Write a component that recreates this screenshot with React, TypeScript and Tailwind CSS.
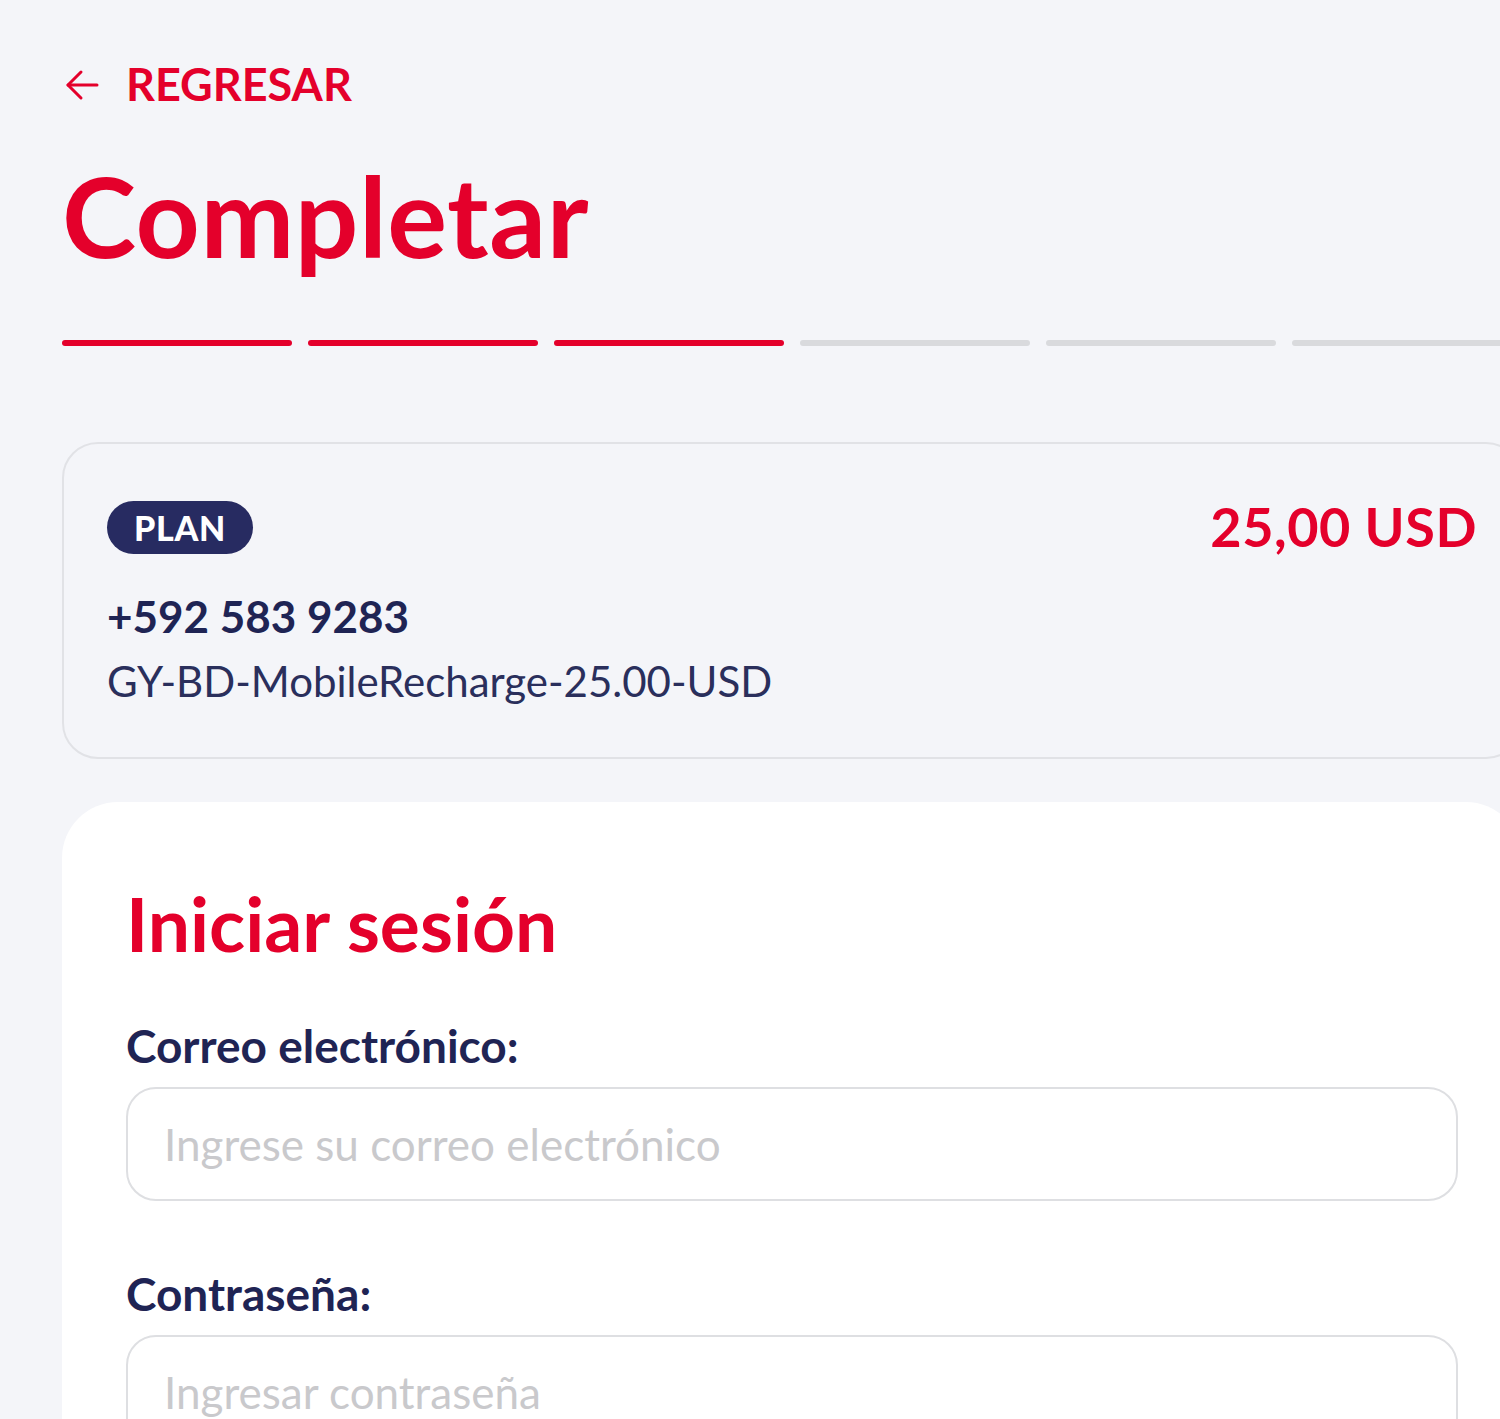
import React from 'react';

const steps = [true, true, true, false, false, false];

const BackArrow = () => (
  <svg width="34" height="32" viewBox="0 0 34 32" fill="none" stroke="currentColor" strokeWidth="3" strokeLinecap="round" strokeLinejoin="round">
    <path d="M16 3 3 16l13 13" />
    <path d="M3 16h29" />
  </svg>
);

export default function App() {
  return (
    <div className="min-h-screen w-full overflow-hidden bg-[#f4f5f9] font-['Lato','Noto_Sans',sans-serif]">
      <div className="ml-[62px] w-[1460px] pt-[62px]">
        {/* back link */}
        <button className="flex items-center gap-[27px] pl-[3px] text-[#e4002b]">
          <BackArrow />
          <span className="text-[45px] font-bold leading-none">REGRESAR</span>
        </button>

        <h1 className="mt-[52px] text-[112px] font-bold leading-none tracking-[0.005em] text-[#e4002b]">
          Completar
        </h1>

        {/* progress */}
        <div className="mt-[69px] grid grid-cols-6 gap-[16px]">
          {steps.map((done, i) => (
            <div
              key={i}
              className={done ? 'h-[6px] rounded-full bg-[#e4002b]' : 'h-[6px] rounded-full bg-[#d9dadd]'}
            />
          ))}
        </div>

        {/* plan summary */}
        <div className="mt-[96px] rounded-[36px] border-2 border-[#e1e2e6] bg-[#f4f5f9] px-[43px] pb-[55px] pt-[57px]">
          <div className="flex items-start justify-between">
            <span className="rounded-full bg-[#272b61] px-[27px] py-[8px] text-[34px] font-black leading-[37px] tracking-[0.02em] text-white">
              PLAN
            </span>
            <span className="mt-[-1px] text-[54px] font-bold leading-none tracking-[0.01em] text-[#e4002b]">
              25,00 USD
            </span>
          </div>
          <p className="mt-[40px] text-[44px] font-bold leading-none text-[#1f2454]">+592 583 9283</p>
          <p className="mt-[22px] text-[42px] leading-none text-[#2a2f5c]">GY-BD-MobileRecharge-25.00-USD</p>
        </div>

        {/* login card */}
        <div className="mt-[43px] rounded-t-[56px] bg-white px-[64px] pb-[80px] pt-[84px]">
          <h2 className="text-[75px] font-bold leading-none text-[#e4002b]">Iniciar sesión</h2>

          <label className="mt-[62px] block text-[46px] font-bold leading-none text-[#1f2454]">
            Correo electrónico:
          </label>
          <input
            type="email"
            placeholder="Ingrese su correo electrónico"
            className="mt-[18px] h-[114px] w-full rounded-[30px] border-2 border-[#dedfe2] bg-white px-[36px] text-[44px] text-[#1f2454] outline-none placeholder:text-[#c9c9cc]"
          />

          <label className="mt-[70px] block text-[46px] font-bold leading-none text-[#1f2454]">
            Contraseña:
          </label>
          <input
            type="password"
            placeholder="Ingresar contraseña"
            className="mt-[18px] h-[114px] w-full rounded-[30px] border-2 border-[#dedfe2] bg-white px-[36px] text-[44px] text-[#1f2454] outline-none placeholder:text-[#c9c9cc]"
          />
        </div>
      </div>
    </div>
  );
}
